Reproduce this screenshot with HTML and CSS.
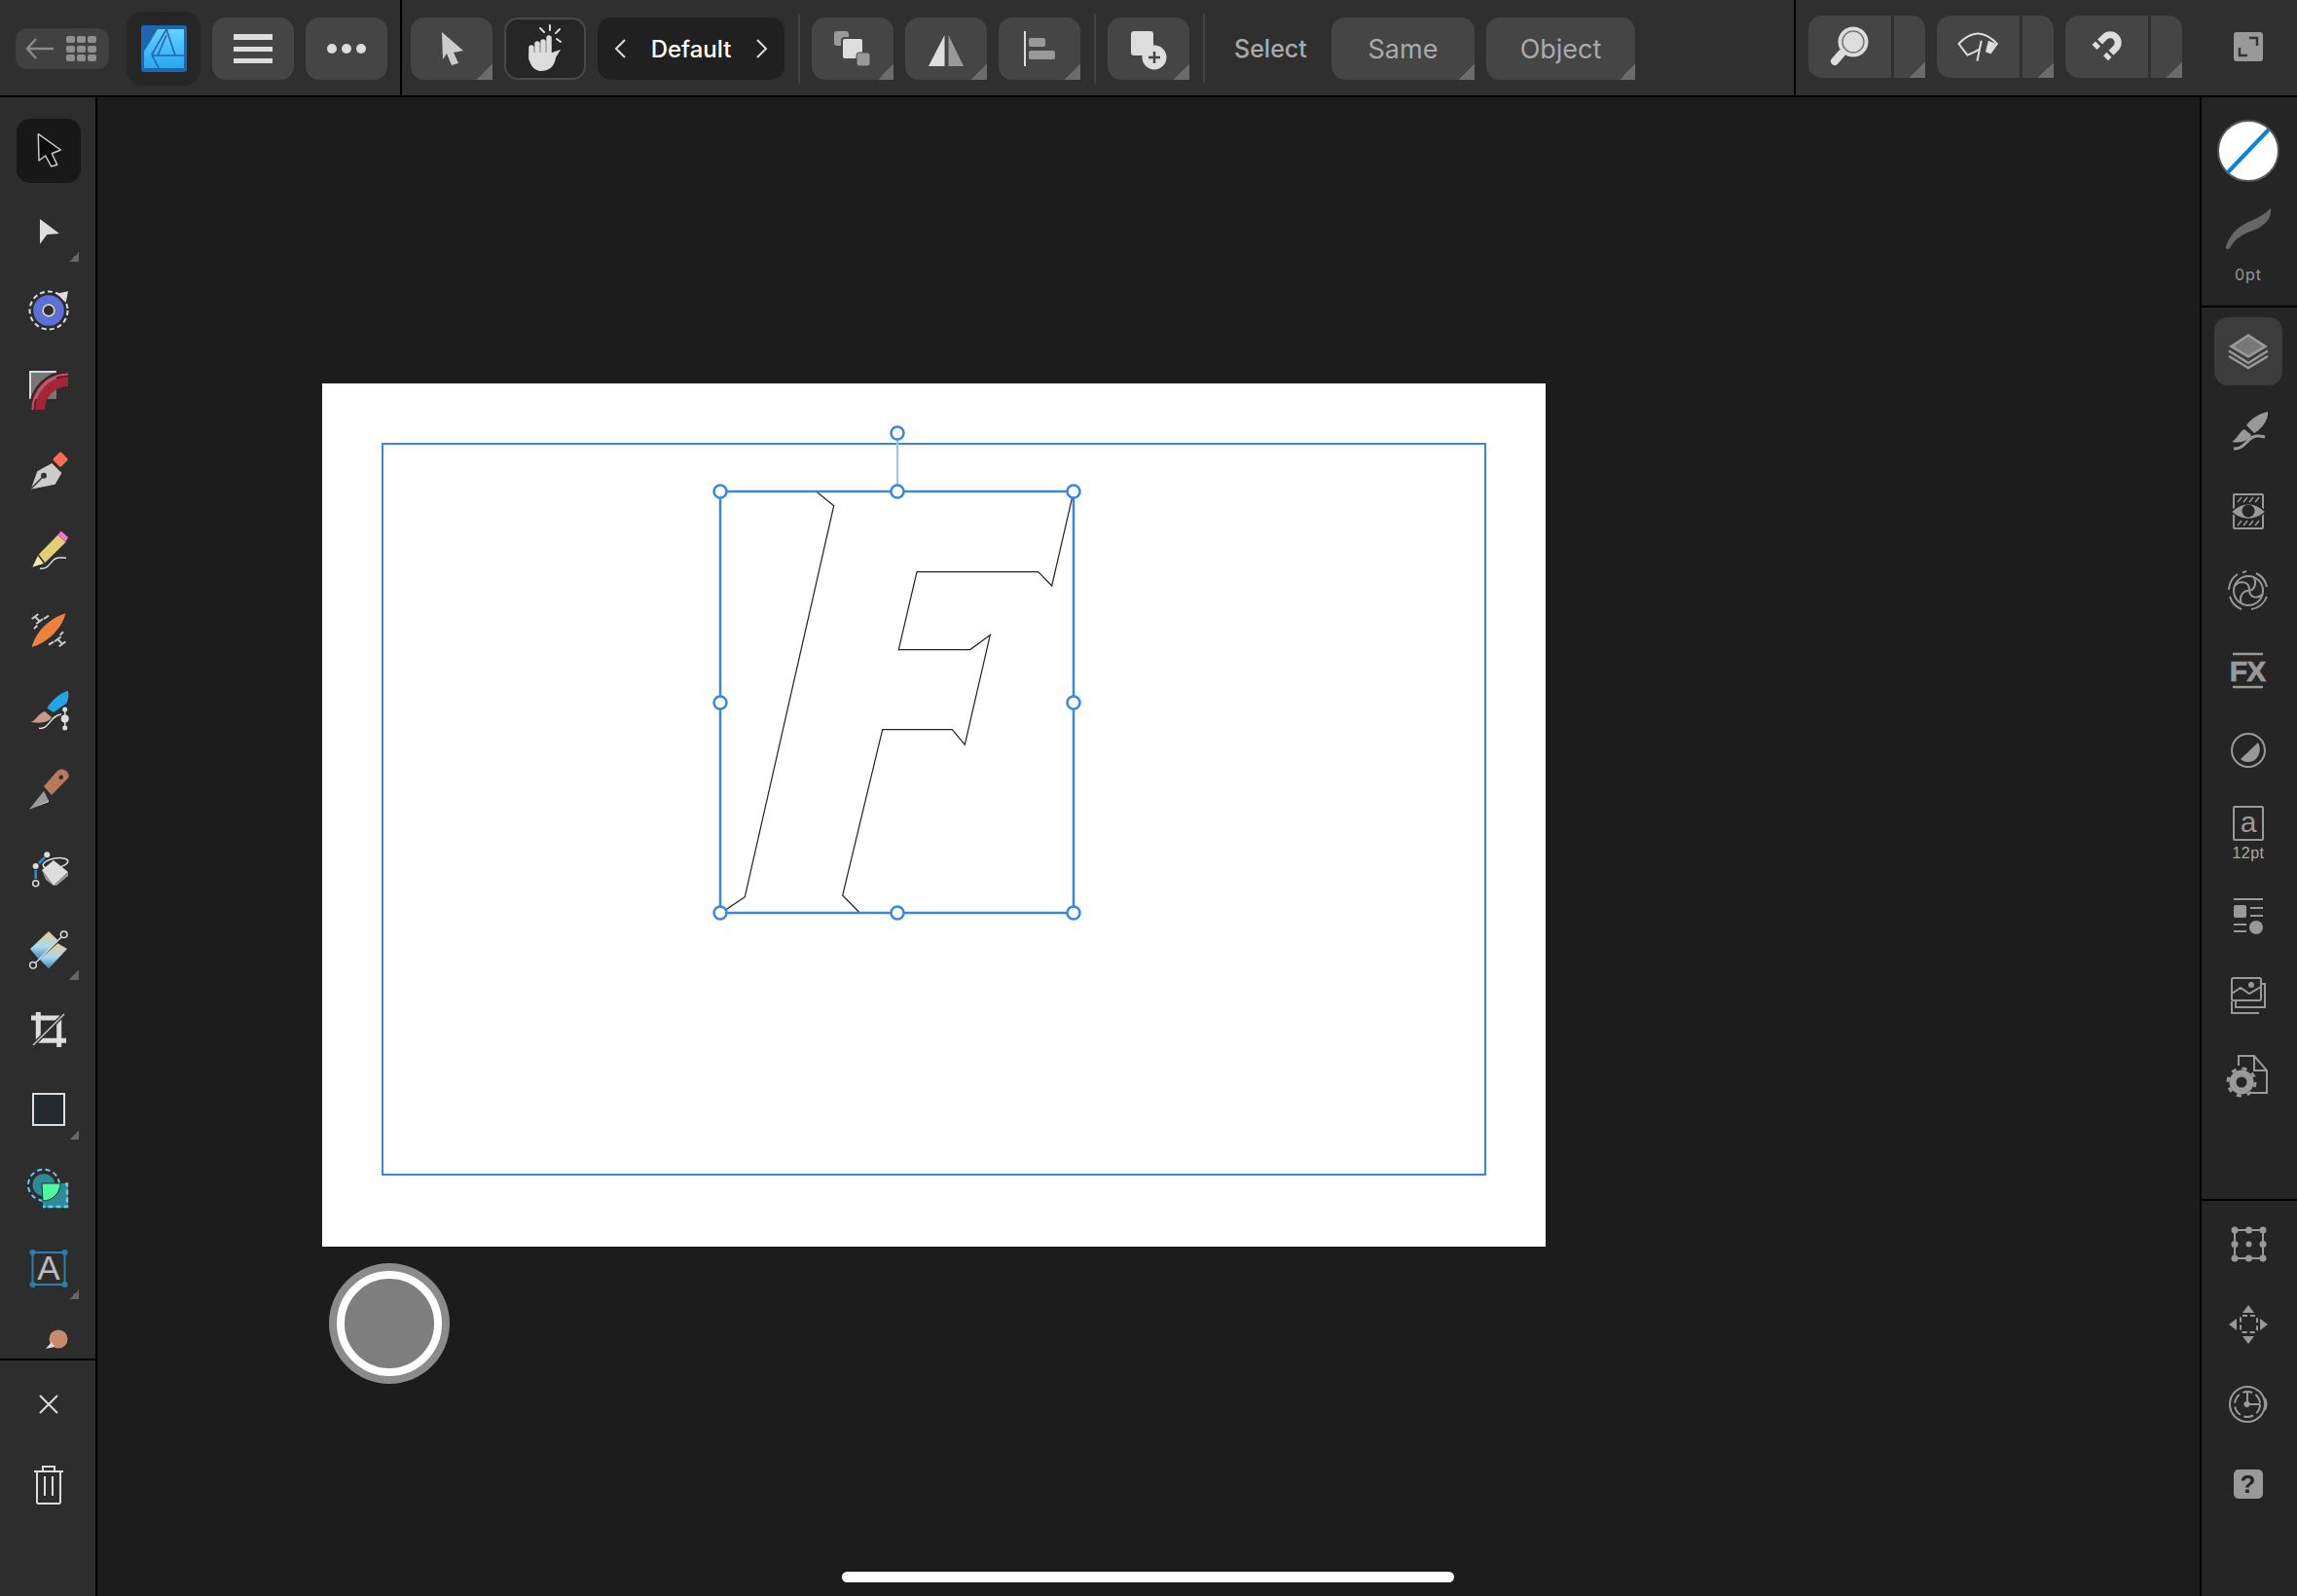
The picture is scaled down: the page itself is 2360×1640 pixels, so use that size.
FILE: index.html
```html
<!DOCTYPE html>
<html lang="en">
  <head>
    <meta charset="UTF-8" />
    <title>Affinity Designer</title>
    <link rel="stylesheet" href="styles.css">
  </head>
  <body>
    <div class="app">
      <!-- top toolbar -->
      <div class="topbar">
        <div class="bar-group bar-left">
          <div class="back-btn">
            <svg width="96" height="42" viewBox="0 0 96 42">
              <path d="M13 21H39M21 11L12 21L21 31" fill="none" stroke="#8a8a8a" stroke-width="2.5"/>
              <g fill="#8f8f8f">
                <rect x="52" y="8" width="9" height="7" rx="2"/><rect x="63" y="8" width="9" height="7" rx="2"/><rect x="74" y="8" width="9" height="7" rx="2"/>
                <rect x="52" y="18" width="9" height="7" rx="2"/><rect x="63" y="18" width="9" height="7" rx="2"/><rect x="74" y="18" width="9" height="7" rx="2"/>
                <rect x="52" y="27" width="9" height="7" rx="2"/><rect x="63" y="27" width="9" height="7" rx="2"/><rect x="74" y="27" width="9" height="7" rx="2"/>
              </g>
            </svg>
          </div>
          <div class="app-btn">
            <svg width="48" height="48" viewBox="0 0 48 48">
              <defs>
                <linearGradient id="appBlue" x1="0" y1="0" x2="0" y2="1">
                  <stop offset="0" stop-color="#66d2ff"/>
                  <stop offset="1" stop-color="#2aa6f2"/>
                </linearGradient>
              </defs>
              <rect width="47" height="48" rx="3" fill="#1c66b2"/>
              <path d="M17 4H44V44H3V27Z" fill="url(#appBlue)"/>
              <path d="M26 4L11 30L19 46M11 31H46M26 4L35 31M17 31L26 10" fill="none" stroke="#1c66b2" stroke-width="1.6"/>
            </svg>
          </div>
          <div class="tool-btn">
            <svg width="84" height="64" viewBox="0 0 84 64">
              <path d="M22 17H62V23H22ZM22 30H62V35H22ZM22 42H62V47H22Z" fill="#ddd"/>
            </svg>
          </div>
          <div class="tool-btn">
            <svg width="84" height="64" viewBox="0 0 84 64">
              <ellipse cx="27" cy="32" rx="5" ry="5" fill="#ddd"/><ellipse cx="42" cy="32" rx="5" ry="5" fill="#ddd"/><ellipse cx="57" cy="32" rx="5" ry="5" fill="#ddd"/>
            </svg>
          </div>
        </div>

        <div class="bar-group bar-main">
          <div class="tool-btn has-menu">
            <svg width="84" height="64" viewBox="0 0 84 64">
              <path d="M32 15L54 34L44 36L49 47L42 49L37 37L33 43Z" fill="#ccc"/>
            </svg>
          </div>
          <div class="tool-btn tool-btn-on">
            <svg width="80" height="60" viewBox="2 2 80 60">
              <g stroke="#ddd" stroke-linecap="round" fill="none">
                <path d="M28 31V42M34 27V42M40 25V42M46 21V42" stroke-width="5.500"/>
                <path d="M47 13V8M53 16L57 12M41 15L37 11M54 22L58 25" stroke-width="2"/>
              </g>
              <path d="M25.500 36C24 48 31 55 38 55C46 55 52 50 53 41L58 33L49 36Z" fill="#ddd"/>
            </svg>
          </div>
          <div class="preset-pill">
            <svg width="14" height="24" viewBox="0 0 14 24"><path d="M12 3L3 12L12 21" fill="none" stroke="#ddd" stroke-width="2"/></svg>
            <span>Default</span>
            <svg width="14" height="24" viewBox="0 0 14 24"><path d="M2 3L11 12L2 21" fill="none" stroke="#ddd" stroke-width="2"/></svg>
          </div>
          <div class="bar-divider"></div>
          <div class="tool-btn has-menu">
            <svg width="84" height="64" viewBox="0 0 84 64">
              <rect x="23" y="14" width="15" height="15" rx="3" fill="#999"/>
              <rect x="31" y="21" width="22" height="22" rx="3" fill="#ddd" stroke="#454545" stroke-width="2"/>
              <rect x="46" y="36" width="14" height="14" rx="3" fill="#999" stroke="#454545" stroke-width="1"/>
            </svg>
          </div>
          <div class="tool-btn has-menu">
            <svg width="84" height="64" viewBox="0 0 84 64">
              <path d="M40.500 18L24 50H40.500Z" fill="#ddd"/>
              <path d="M44.500 18L60 50H44.500Z" fill="#999"/>
            </svg>
          </div>
          <div class="tool-btn has-menu">
            <svg width="84" height="64" viewBox="0 0 84 64">
              <rect x="26" y="14" width="2" height="36" fill="#ddd"/>
              <rect x="31" y="21" width="17" height="9" rx="2" fill="#999"/>
              <rect x="31" y="34" width="27" height="9" rx="2" fill="#999"/>
            </svg>
          </div>
          <div class="bar-divider"></div>
          <div class="tool-btn has-menu">
            <svg width="84" height="64" viewBox="0 0 84 64">
              <rect x="24" y="14" width="23" height="25" rx="3" fill="#ddd"/>
              <circle cx="48" cy="41" r="12.500" fill="#ddd"/>
              <path d="M48 35V47M42 41H54" stroke="#454545" stroke-width="2.500"/>
            </svg>
          </div>
          <div class="bar-divider"></div>
          <div class="select-label">Select</div>
          <div class="text-btn text-btn-same has-menu">Same</div>
          <div class="text-btn text-btn-object has-menu">Object</div>
        </div>

        <div class="bar-group bar-right">
          <div class="split-btn has-menu">
            <div class="split-main">
              <svg width="85" height="64" viewBox="0 0 85 64">
                <path d="M34 39L27 47" stroke="#ddd" stroke-width="8" stroke-linecap="round"/>
                <path d="M36 37L32 41" stroke="#ddd" stroke-width="4"/>
                <circle cx="46" cy="27" r="14" fill="#ddd" stroke="#ddd" stroke-width="3"/>
                <circle cx="46" cy="27" r="11" fill="#ddd" stroke="#777" stroke-width="1.500"/>
              </svg>
            </div>
          </div>
          <div class="split-btn has-menu">
            <div class="split-main">
              <svg width="85" height="64" viewBox="0 0 85 64">
                <path d="M43 35L38.600 37.300L31.400 40.700L22.500 29Q42 8 61.800 29L54.600 39" fill="none" stroke="#ddd" stroke-width="2" stroke-linejoin="round"/>
                <path d="M45.700 25.700L41.400 46.700" stroke="#ddd" stroke-width="2"/>
                <path d="M52.900 25.700L50 37.300L54.600 39L60.500 29Z" fill="#ddd"/>
              </svg>
            </div>
          </div>
          <div class="split-btn has-menu">
            <div class="split-main">
              <svg width="85" height="64" viewBox="0 0 85 64">
                <path d="M35.500 27L40.400 22.100A8 8 0 0 1 51.800 33.500L47 38.300" fill="none" stroke="#ddd" stroke-width="7"/>
                <path d="M33.500 29L30 32.500M45 40.300L41.500 43.800" fill="none" stroke="#ddd" stroke-width="7"/>
              </svg>
            </div>
          </div>
          <div class="expand-icon">
            <svg width="30" height="30" viewBox="0 0 30 30">
              <rect width="30" height="30" rx="3" fill="#999"/>
              <path d="M16 6H24V14M6 16V24H14" fill="none" stroke="#333" stroke-width="2.500"/>
            </svg>
          </div>
        </div>
      </div>

      <div class="workspace">
        <!-- left tools -->
        <div class="left-panel">
          <div class="tools-scroll">
            <div class="tool-cell tool-cell-on">
              <svg width="66" height="66" viewBox="0 0 66 66">
                <path d="M22.300 15.700L23 43L29.700 38L35.700 49L41.700 47.300L36.300 35.700L45.300 32Z" fill="#0c0c0c" stroke="#ccc" stroke-width="1.500" stroke-linejoin="round"/>
              </svg>
            </div>
            <div class="tool-cell has-corner">
              <svg width="66" height="66" viewBox="0 0 66 66">
                <path d="M24 21L44 36L31.300 37L24 46.700Z" fill="#ddd"/>
              </svg>
            </div>
            <div class="tool-cell">
              <svg width="66" height="66" viewBox="0 0 66 66">
                <circle cx="33" cy="33" r="19.500" fill="none" stroke="#ddd" stroke-width="2" stroke-dasharray="5 3.200"/>
                <circle cx="33" cy="33" r="11.500" fill="none" stroke="#5c70dd" stroke-width="8.500"/>
                <circle cx="33" cy="33" r="6" fill="#2d2d2d" stroke="#ccc" stroke-width="2"/>
                <path d="M41.300 15.700L53 13.300L50.700 25Z" fill="#ddd"/>
              </svg>
            </div>
            <div class="tool-cell">
              <svg width="66" height="66" viewBox="0 0 66 66">
                <rect x="14" y="14" width="27" height="28" fill="#777"/>
                <path d="M14 42V14H41" fill="none" stroke="#ddd" stroke-width="2"/>
                <path d="M14.500 53A38.500 38.500 0 0 1 53 14.500" fill="none" stroke="#2d2d2d" stroke-width="3.500"/>
                <path d="M16.500 53A36.500 36.500 0 0 1 53 16.500" fill="none" stroke="#f04060" stroke-width="2"/>
                <path d="M19 53A34 34 0 0 1 53 19V29A24 24 0 0 0 29 53Z" fill="#a52535"/>
              </svg>
            </div>
            <div class="tool-cell">
              <svg width="66" height="66" viewBox="0 0 66 66">
                <path d="M36.300 26L46.300 36L39.700 47.700L14.700 52.700L21.300 34.300Z" fill="#ccc"/>
                <path d="M15 52L28 39" stroke="#333" stroke-width="1.500"/>
                <circle cx="28" cy="38.700" r="3" fill="#333"/>
                <rect x="39.500" y="16.500" width="11.500" height="11.500" rx="1.500" transform="rotate(45 45.300 22)" fill="#ff6b50"/>
              </svg>
            </div>
            <div class="tool-cell">
              <svg width="66" height="66" viewBox="0 0 66 66">
                <path d="M22.300 38.300L42.300 17.700L50.700 25L28.700 46.700Z" fill="#e3cf72"/>
                <path d="M42.300 17.700L45.700 13.700L53 20L50.700 24.500Z" fill="#f572e0"/>
                <path d="M22.300 38.300L16.300 50.700L28.700 46.700Z" fill="#f3e8b5"/>
                <path d="M22.300 38.300L28.700 46.700" stroke="#2d2d2d" stroke-width="1.500"/>
                <path d="M24 52C33 54 35 44 40 42C44 40 48 41 51 41.500" fill="none" stroke="#ddd" stroke-width="1.500"/>
              </svg>
            </div>
            <div class="tool-cell">
              <svg width="66" height="66" viewBox="0 0 66 66">
                <path d="M15.700 51C19 37 32 22 50.300 16.300C47 32 31 47 15.700 51Z" fill="#f0813a"/>
                <g stroke="#ccc" stroke-width="2" fill="none">
                  <path d="M19 19.700L23.700 24.300M15.700 22L22.300 17M20.300 27L27 22M28 22L33 18.700M18 32L21.300 28.700"/>
                  <path d="M47 47.600L42.300 43M50.300 45.300L43.700 50.300M45.700 40.300L39 45.300M38 45.300L33 48.600M48 35.300L44.700 38.600"/>
                </g>
              </svg>
            </div>
            <div class="tool-cell">
              <svg width="66" height="66" viewBox="0 0 66 66">
                <path d="M31.300 31.700C36 24 44 16 53 14C54 19 53 23 51.300 26.700L38 36Z" fill="#25a4e8"/>
                <path d="M14.700 45.700C20 45 22 37 29 35L36 41C34 46 24 48 14.700 45.700Z" fill="#c99b85"/>
                <path d="M23 52.300C34 54 34 39 46 38" fill="none" stroke="#ddd" stroke-width="1.500"/>
                <path d="M49.700 33V52" stroke="#ddd" stroke-width="1.500"/>
                <circle cx="49.700" cy="33" r="2.500" fill="#ddd"/><circle cx="49.700" cy="42.500" r="4" fill="#ddd"/><circle cx="49.700" cy="52" r="2.500" fill="#ddd"/>
              </svg>
            </div>
            <div class="tool-cell">
              <svg width="66" height="66" viewBox="0 0 66 66">
                <path d="M28 30L42 14C47 10 55 14 53.500 21L36 39Z" fill="#b9795a"/>
                <circle cx="45.700" cy="20.700" r="2.300" fill="#2d2d2d"/>
                <path d="M13 53.700L28 34.700L33 44.700Z" fill="#9a9a9a"/>
                <path d="M13 53.700L33 44.700L33 46Z" fill="#eee"/>
              </svg>
            </div>
            <div class="tool-cell">
              <svg width="66" height="66" viewBox="0 0 66 66">
                <path d="M26 34L38 24L53 36L38 50Z" fill="#ddd"/>
                <path d="M38 50L53 36V40L41 50Z" fill="#999"/>
                <path d="M26 34L38 50L30 44Z" fill="#999"/>
                <ellipse cx="40" cy="27" rx="13" ry="5" fill="none" stroke="#ddd" stroke-width="1.500" transform="rotate(-10 40 27)"/>
                <circle cx="31.300" cy="18.300" r="3" fill="#ddd"/>
                <circle cx="19.700" cy="30" r="3" fill="#ddd"/>
                <circle cx="19.700" cy="47.700" r="3" fill="none" stroke="#ddd" stroke-width="1.500"/>
                <path d="M19.700 34V43M23 27L29 21" stroke="#1f96db" stroke-width="2.500"/>
              </svg>
            </div>
            <div class="tool-cell has-corner">
              <svg width="66" height="66" viewBox="0 0 66 66">
                <defs>
                  <linearGradient id="swatch" x1="0" y1="0" x2="0" y2="1">
                    <stop offset="0" stop-color="#ecc98f"/>
                    <stop offset="0.55" stop-color="#a9daf0"/>
                    <stop offset="1" stop-color="#3b88b8"/>
                  </linearGradient>
                </defs>
                <path d="M14 33L33 15L42.300 24L23 44Z" fill="url(#swatch)"/>
                <path d="M42.300 27.300L52 33L33 53.300L24 44Z" fill="url(#swatch)"/>
                <path d="M20 47L46 21" stroke="#ddd" stroke-width="1.500"/>
                <circle cx="17" cy="49.700" r="3.300" fill="#2d2d2d" stroke="#ddd" stroke-width="1.500"/>
                <circle cx="48.700" cy="18.300" r="3.300" fill="#2d2d2d" stroke="#ddd" stroke-width="1.500"/>
              </svg>
            </div>
            <div class="tool-cell">
              <svg width="66" height="66" viewBox="0 0 66 66">
                <path d="M22.300 16V45.300H51M15 22H43.700V52" fill="none" stroke="#ddd" stroke-width="5"/>
                <path d="M17 50L49 18" stroke="#2d2d2d" stroke-width="4"/>
                <path d="M17 50L49 18" stroke="#ccc" stroke-width="1.500"/>
              </svg>
            </div>
            <div class="tool-cell has-corner">
              <svg width="66" height="66" viewBox="0 0 66 66">
                <rect x="17" y="18" width="32" height="32" fill="#222a2e" stroke="#ddd" stroke-width="2"/>
              </svg>
            </div>
            <div class="tool-cell">
              <svg width="66" height="66" viewBox="0 0 66 66">
                <circle cx="28" cy="29.700" r="11.500" fill="#2e8a96"/>
                <circle cx="28" cy="29.700" r="16" fill="none" stroke="#6ec9f0" stroke-width="2" stroke-dasharray="5 3.500"/>
                <path d="M30 28H53V53H27V42Z" fill="#2e8a96"/>
                <path d="M50 28.500H52V52H27" fill="none" stroke="#6ec9f0" stroke-width="2.500" stroke-dasharray="5 3"/>
                <path d="M26 28H45A18 18 0 0 1 27 46Z" fill="#4cfb9c" stroke="#2d2d2d" stroke-width="1"/>
              </svg>
            </div>
            <div class="tool-cell has-corner">
              <svg width="66" height="66" viewBox="0 0 66 66">
                <rect x="16.500" y="17" width="33" height="33" fill="none" stroke="#2a7fb0" stroke-width="2"/>
                <circle cx="16.500" cy="17" r="3" fill="#2a7fb0"/><circle cx="49.500" cy="17" r="3" fill="#2a7fb0"/><circle cx="16.500" cy="50" r="3" fill="#2a7fb0"/><circle cx="49.500" cy="50" r="3" fill="#2a7fb0"/>
                <text x="33" y="44.500" class="svg-text svg-a">A</text>
              </svg>
            </div>
            <div class="tool-cell">
              <svg width="66" height="66" viewBox="0 0 66 66">
                <circle cx="43" cy="24" r="9.500" fill="#c98a6b"/>
                <path d="M30 34L36 27L39 32Z" fill="#ddd"/>
              </svg>
            </div>
          </div>
          <div class="tools-bottom">
            <div class="tool-cell">
              <svg width="66" height="66" viewBox="0 0 66 66">
                <path d="M24 24L42 42M42 24L24 42" stroke="#ddd" stroke-width="2"/>
              </svg>
            </div>
            <div class="tool-cell">
              <svg width="66" height="66" viewBox="0 0 66 66">
                <path d="M18 20H48M27 19V15H39V19" fill="none" stroke="#ddd" stroke-width="2"/>
                <path d="M21 20V51.500A1.500 1.500 0 0 0 22.500 53H43.500A1.500 1.500 0 0 0 45 51.500V20" fill="none" stroke="#ddd" stroke-width="2"/>
                <path d="M29 25V45M37 25V45" stroke="#ddd" stroke-width="2"/>
              </svg>
            </div>
          </div>
        </div>

        <!-- document canvas -->
        <div class="canvas">
          <svg class="doc" width="2160" height="1540" viewBox="100 100 2160 1540">
            <rect x="331" y="394" width="1257" height="887" fill="#fff"/>
            <rect x="393" y="456" width="1133" height="751" fill="none" stroke="#3a87e0" stroke-width="2"/>
            <path d="M838.700 505L856.700 519.700L765.300 921.700L741 938H883.300L865.700 920L906.700 749.700H978.300L991.300 765.200L1017.300 652.400L996.700 667.600H923.300L942 587.600H1066.700L1080.700 602L1103 505Z" fill="#fff" stroke="#222" stroke-width="1.200"/>
            <path d="M922 451V505" stroke="#9cc4f2" stroke-width="2"/>
            <rect x="740" y="505" width="363" height="433" fill="none" stroke="#3a87e0" stroke-width="2.500"/>
            <g fill="#fff" stroke="#3a87e0" stroke-width="2.500">
              <circle cx="922" cy="445" r="6.500"/>
              <circle cx="740" cy="505" r="6.500"/><circle cx="922" cy="505" r="6.500"/><circle cx="1103" cy="505" r="6.500"/>
              <circle cx="740" cy="722" r="6.500"/><circle cx="1103" cy="722" r="6.500"/>
              <circle cx="740" cy="938" r="6.500"/><circle cx="922" cy="938" r="6.500"/><circle cx="1103" cy="938" r="6.500"/>
            </g>
          </svg>
          <div class="record-btn"><div class="record-inner"></div></div>
          <div class="home-bar"></div>
        </div>

        <!-- right studio icons -->
        <div class="right-panel">
          <div class="panel-section stroke-section">
            <svg width="70" height="70" viewBox="0 0 70 70">
              <circle cx="35" cy="35" r="31" fill="#fff" stroke="#555" stroke-width="2"/>
              <path d="M14 57L56 13" stroke="#0a82d8" stroke-width="4"/>
            </svg>
            <svg class="stroke-brush" width="50" height="44" viewBox="0 0 50 44">
              <path d="M2 40C8 24 18 18 28 14C36 10 42 7 48 1C49 10 44 17 34 22C22 27 12 30 6 42C4 44 1 43 2 40Z" fill="#666"/>
            </svg>
            <div class="stroke-label">0pt</div>
          </div>
          <div class="panel-section studio-section">
            <div class="panel-cell panel-cell-on">
              <svg width="70" height="70" viewBox="0 0 70 70">
                <path d="M35 17L55 30L35 42L15 30Z" fill="#999"/>
                <path d="M35 20L50 30L35 39L20 30Z" fill="#3c3c3c" opacity="0.35"/>
                <path d="M15 34.500L35 47L55 34.500M15 40L35 52L55 40" fill="none" stroke="#999" stroke-width="2.500"/>
              </svg>
            </div>
            <div class="panel-cell">
              <svg width="70" height="70" viewBox="0 0 70 70">
                <path d="M33 29C38 22 46 17 55 15C56 22 50 32 41 37Z" fill="#999"/>
                <path d="M18 46C23 44 25 36 31 33L38 39C36 44 28 48 18 46Z" fill="#999"/>
                <path d="M20 53C30 54 33 44 40 41C44 39 48 40 52 41" fill="none" stroke="#999" stroke-width="3"/>
              </svg>
            </div>
            <div class="panel-cell">
              <svg width="70" height="70" viewBox="0 0 70 70">
                <rect x="20" y="18" width="30" height="35" rx="1" fill="none" stroke="#999" stroke-width="2"/>
                <path d="M24 26L28 21M30 26L34 21M36 26L40 21M42 26L46 21M24 50L28 45M30 50L34 45M36 50L40 45M42 50L46 45" stroke="#999" stroke-width="1.500"/>
                <path d="M17 36Q35 19 53 36Q35 51 17 36Z" fill="#999" stroke="#252525" stroke-width="1.500"/>
                <circle cx="35" cy="35" r="6.500" fill="#252525"/>
              </svg>
            </div>
            <div class="panel-cell">
              <svg width="70" height="70" viewBox="0 0 70 70">
                <g fill="none" stroke="#999" stroke-width="2">
                  <circle cx="35" cy="35" r="15"/>
                  <path d="M24 18A20 20 0 0 0 15 34M16 41A20 20 0 0 0 28 54M38 54A20 20 0 0 0 54 41M54 31A20 20 0 0 0 43 17M29 16.500A20 20 0 0 1 33 15"/>
                  <path d="M21 30C26 24 36 25 36 34C36 42 44 44 49 39M28 48C25 42 29 35 35 35M41 22C44 28 41 34 36 35"/>
                </g>
              </svg>
            </div>
            <div class="panel-cell">
              <svg width="70" height="70" viewBox="0 0 70 70">
                <path d="M19 18H50M19 52H50" stroke="#999" stroke-width="2.500"/>
                <text x="34" y="46" class="svg-text svg-fx">FX</text>
              </svg>
            </div>
            <div class="panel-cell">
              <svg width="70" height="70" viewBox="0 0 70 70">
                <circle cx="35" cy="35" r="17" fill="none" stroke="#999" stroke-width="2"/>
                <path d="M27 44L45 27C50 36 44 47 35 47C31 47 29 46 27 44Z" fill="#999"/>
              </svg>
            </div>
            <div class="panel-cell">
              <svg width="70" height="70" viewBox="0 0 70 70">
                <rect x="20" y="11" width="30" height="34" rx="1" fill="none" stroke="#999" stroke-width="2"/>
                <text x="35" y="37" class="svg-text svg-small-a">a</text>
                <text x="35" y="64" class="svg-text svg-pt">12pt</text>
              </svg>
            </div>
            <div class="panel-cell panel-cell-gap">
              <svg width="70" height="70" viewBox="0 0 70 70">
                <path d="M20 18H50M37 27H50M37 35H50M20 44H33M20 51H33" stroke="#999" stroke-width="2"/>
                <rect x="20" y="24" width="13" height="13" rx="2" fill="#999"/>
                <circle cx="43" cy="47" r="7" fill="#999"/>
              </svg>
            </div>
            <div class="panel-cell">
              <svg width="70" height="70" viewBox="0 0 70 70">
                <g fill="none" stroke="#999" stroke-width="2">
                  <rect x="18" y="17" width="30" height="23" rx="1.500"/>
                  <path d="M18 33L27 27L36 33L48 26"/>
                  <path d="M22 41V47H52V23H48M18 41V53H46"/>
                </g>
                <circle cx="38" cy="24" r="3" fill="#999"/>
              </svg>
            </div>
            <div class="panel-cell">
              <svg width="70" height="70" viewBox="0 0 70 70">
                <path d="M25 25V15H41L54 30V53H38M41 15V30H54" fill="none" stroke="#999" stroke-width="2"/>
                <circle cx="28" cy="42" r="9" fill="none" stroke="#999" stroke-width="7"/>
                <circle cx="28" cy="42" r="14" fill="none" stroke="#999" stroke-width="3" stroke-dasharray="5 6"/>
              </svg>
            </div>
          </div>
          <div class="panel-section history-section">
            <div class="panel-cell">
              <svg width="70" height="70" viewBox="0 0 70 70">
                <rect x="21" y="20" width="29" height="29" fill="none" stroke="#999" stroke-width="2"/>
                <g fill="#999">
                  <circle cx="21" cy="20" r="3.500"/><circle cx="35.500" cy="20" r="3.500"/><circle cx="50" cy="20" r="3.500"/>
                  <circle cx="21" cy="34.500" r="3.500"/><circle cx="35.500" cy="34.500" r="3"/><circle cx="50" cy="34.500" r="3.500"/>
                  <circle cx="21" cy="49" r="3.500"/><circle cx="35.500" cy="49" r="3.500"/><circle cx="50" cy="49" r="3.500"/>
                </g>
              </svg>
            </div>
            <div class="panel-cell">
              <svg width="70" height="70" viewBox="0 0 70 70">
                <rect x="27" y="26" width="17" height="17" rx="2" fill="none" stroke="#999" stroke-width="2" stroke-dasharray="5 3"/>
                <path d="M35 15L41 23H29ZM35 55L41 47H29ZM15 35L23 29V41ZM55 35L47 29V41Z" fill="#999"/>
              </svg>
            </div>
            <div class="panel-cell">
              <svg width="70" height="70" viewBox="0 0 70 70">
                <circle cx="34" cy="35" r="18" fill="none" stroke="#999" stroke-width="2"/>
                <circle cx="34" cy="35" r="13" fill="none" stroke="#999" stroke-width="2" stroke-dasharray="10 4"/>
                <path d="M34 35V21M34 35H47" stroke="#999" stroke-width="2"/>
                <circle cx="33.500" cy="35" r="3" fill="#999"/>
                <path d="M52 29A18 18 0 0 1 52 41Q55 35 52 29Z" fill="#999" stroke="#999" stroke-width="2"/>
              </svg>
            </div>
            <div class="panel-cell">
              <svg width="70" height="70" viewBox="0 0 70 70">
                <rect x="20" y="20" width="30" height="30" rx="5" fill="#999"/>
                <text x="34.500" y="44" class="svg-text svg-help">?</text>
              </svg>
            </div>
          </div>
        </div>
      </div>
    </div>
  </body>
</html>
```

FILE: styles.css
```css
* {
  box-sizing: border-box;
  padding: 0;
  margin: 0;
}

body {
  background: #1c1c1c;
  font-family: "Inter", "Liberation Sans", sans-serif;
  overflow: hidden;
}

svg {
  display: block;
  flex-shrink: 0;
}

.app {
  width: 2360px;
  height: 1640px;
  display: flex;
  flex-direction: column;
  overflow: hidden;
}

/* top toolbar */
.topbar {
  height: 100px;
  display: flex;
  background: #2f2f2f;
  border-bottom: 2px solid #000;
}

.bar-group {
  display: flex;
  align-items: center;
  gap: 12px;
}

.bar-left {
  width: 413px;
  padding: 2px 0 0 16px;
  border-right: 2px solid #000;
}

.bar-main {
  width: 1432px;
  padding: 2px 0 0 9px;
  border-right: 2px solid #000;
}

.bar-right {
  flex: 1;
  padding: 0 0 2px 13px;
}

.back-btn {
  width: 96px;
  height: 42px;
  margin-right: 6px;
  background: #414141;
  border-radius: 12px;
}

.app-btn {
  width: 76px;
  height: 76px;
  padding: 14px 15px;
  background: #262626;
  border-radius: 16px;
}

.tool-btn {
  position: relative;
  width: 84px;
  height: 64px;
  background: #454545;
  border-radius: 14px;
}

.has-menu {
  position: relative;
}

.has-menu::after {
  content: "";
  position: absolute;
  right: 0;
  bottom: 0;
  width: 16px;
  height: 16px;
  background: linear-gradient(135deg, transparent 50%, #6b6b6b 50%);
}

.tool-btn-on {
  background: #262626;
  border: 2px solid #484848;
}

.preset-pill {
  width: 192px;
  height: 64px;
  display: flex;
  align-items: center;
  justify-content: space-between;
  padding: 0 16px;
  background: #202020;
  border-radius: 14px;
  color: #fff;
  font-size: 24px;
  font-weight: 500;
}

.bar-divider {
  width: 2px;
  height: 72px;
  margin-left: 2px;
  background: #424242;
}

.select-label {
  width: 74px;
  margin: 0 14px 0 18px;
  color: #aaa;
  font-size: 25px;
  font-weight: 500;
  white-space: nowrap;
}

.text-btn {
  height: 64px;
  display: flex;
  align-items: center;
  justify-content: center;
  background: #454545;
  border-radius: 14px;
  color: #aaa;
  font-size: 27px;
}

.text-btn-same {
  width: 147px;
}

.text-btn-object {
  width: 153px;
}

.split-btn {
  width: 120px;
  height: 64px;
  background: #454545;
  border-radius: 14px;
}

.split-main {
  width: 88px;
  height: 64px;
  border-right: 3px solid #303030;
}

.expand-icon {
  margin-left: 41px;
}

/* left tools */
.workspace {
  flex: 1;
  display: flex;
  min-height: 0;
}

.left-panel {
  width: 100px;
  display: flex;
  flex-direction: column;
  background: #2d2d2d;
  border-right: 2px solid #000;
}

.tools-scroll {
  height: 1298px;
  display: flex;
  flex-direction: column;
  gap: 16px;
  padding: 22px 0 0 17px;
  overflow: hidden;
  border-bottom: 2px solid #000;
}

.tools-bottom {
  display: flex;
  flex-direction: column;
  gap: 16px;
  padding: 12px 0 0 17px;
}

.tool-cell {
  position: relative;
  flex-shrink: 0;
  width: 66px;
  height: 66px;
  border-radius: 14px;
}

.tool-cell-on {
  background: #181818;
}

.has-corner::after {
  content: "";
  position: absolute;
  right: 2px;
  bottom: 1px;
  width: 10px;
  height: 10px;
  background: linear-gradient(135deg, transparent 50%, #666 50%);
}

/* document canvas */
.canvas {
  position: relative;
  flex: 1;
  background: #1c1c1c;
}

.doc {
  position: absolute;
  left: 0;
  top: 0;
}

.record-btn {
  position: absolute;
  left: 238px;
  top: 1198px;
  width: 124px;
  height: 124px;
  padding: 8px;
  background: #8b8b8b;
  border-radius: 50%;
}

.record-inner {
  width: 108px;
  height: 108px;
  background: #7e7e7e;
  border: 8px solid #fff;
  border-radius: 50%;
}

.home-bar {
  position: absolute;
  left: 765px;
  bottom: 14px;
  width: 629px;
  height: 11px;
  background: #fff;
  border-radius: 6px;
}

/* right studio icons */
.right-panel {
  width: 100px;
  display: flex;
  flex-direction: column;
  background: #252525;
  border-left: 2px solid #000;
}

.panel-section {
  display: flex;
  flex-direction: column;
  align-items: center;
  padding-right: 2px;
  border-bottom: 2px solid #000;
}

.stroke-section {
  height: 216px;
  padding-top: 20px;
}

.stroke-brush {
  margin-top: 23px;
}

.stroke-label {
  margin-top: 15px;
  color: #999;
  font-size: 16px;
  letter-spacing: 1px;
}

.studio-section {
  height: 918px;
  gap: 12px;
  padding-top: 10px;
}

.history-section {
  flex: 1;
  gap: 12px;
  padding-top: 10px;
  border-bottom: 0;
}

.panel-cell {
  width: 70px;
  height: 70px;
  flex-shrink: 0;
  border-radius: 14px;
}

.panel-cell-on {
  background: #3c3c3c;
}

.panel-cell-gap {
  margin-top: 6px;
}

.svg-text {
  text-anchor: middle;
  font-family: "Liberation Sans", sans-serif;
}

.svg-a {
  fill: #bbb;
  font-size: 35px;
}

.svg-fx {
  fill: #999;
  stroke: #999;
  stroke-width: 0.7px;
  font-size: 30px;
  font-weight: bold;
  letter-spacing: -1px;
}

.svg-small-a {
  fill: #999;
  font-size: 30px;
}

.svg-pt {
  fill: #aaa;
  font-size: 16px;
  letter-spacing: 0.5px;
}

.svg-help {
  fill: #252525;
  font-size: 26px;
  font-weight: bold;
}
```
